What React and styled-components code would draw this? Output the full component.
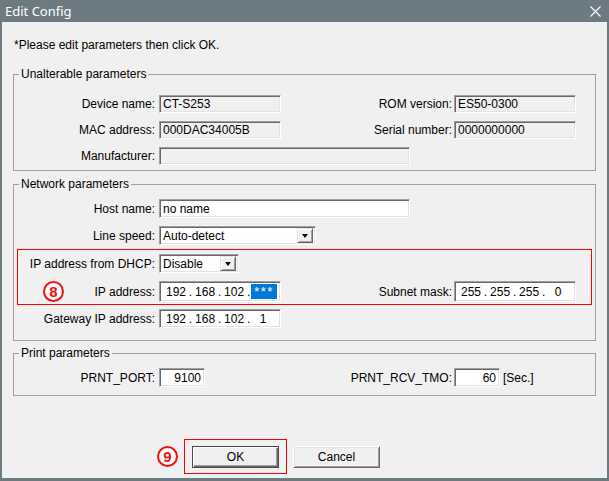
import React from 'react';
import styled, { createGlobalStyle } from 'styled-components';

const GlobalStyle = createGlobalStyle`
  html, body {
    margin: 0;
    padding: 0;
    background: #6b7b81;
    overflow: hidden;
  }
  body {
    font-family: "Liberation Sans", Arial, sans-serif;
    font-size: 12px;
    color: #000;
  }
`;

const Frame = styled.div`
  width: 609px;
  height: 481px;
  box-sizing: border-box;
  background: #6b7b81;
  display: flex;
  flex-direction: column;
  padding: 0 2px 3px 2px;
`;

const TitleBar = styled.div`
  flex: 0 0 22px;
  display: flex;
  align-items: center;
  justify-content: space-between;
  padding: 0 6px 0 3px;
  color: #fff;
  font-family: "Noto Sans", "Open Sans", sans-serif;
  font-size: 13px;
`;

const Body = styled.div`
  flex: 1;
  background: #f0f0f0;
  display: flex;
  flex-direction: column;
  padding: 16px 11px 0 11px;
`;

const Note = styled.div`
  line-height: 14px;
  padding-left: 1px;
`;

const Group = styled.fieldset`
  margin: ${p => p.$top}px 0 0 0;
  padding: 0;
  min-width: 0;
  border: 1px solid #a0a0a0;
`;

const Legend = styled.legend`
  margin-left: 5px;
  padding: 0 2px;
  line-height: 14px;
  font-size: 12px;
`;

const Rows = styled.div`
  display: flex;
  flex-direction: column;
  gap: 8px;
  padding: ${p => p.$pad};
`;

const Row = styled.div`
  display: grid;
  grid-template-columns: ${p => p.$lead || 145}px 171px 124px 1fr;
  align-items: center;
  height: ${p => p.$h || 19}px;
`;

const Label = styled.span`
  display: flex;
  justify-content: flex-end;
  align-items: center;
  padding-right: ${p => p.$gap}px;
  white-space: nowrap;
`;

const Cell = styled.div`
  display: flex;
  align-items: center;
  height: 100%;
  grid-column: ${p => (p.$span ? 'span 2' : 'auto')};
`;

const TextBox = styled.div`
  box-sizing: border-box;
  width: ${p => p.$w}px;
  height: 100%;
  display: flex;
  align-items: center;
  justify-content: ${p => (p.$right ? 'flex-end' : 'flex-start')};
  padding: 0 3px;
  background: ${p => (p.$readOnly ? '#f0f0f0' : '#fff')};
  border: 1px solid;
  border-color: #a0a0a0 #fff #fff #a0a0a0;
  box-shadow: inset 1px 1px 0 #696969, inset -1px -1px 0 #e3e3e3;
  white-space: nowrap;
`;

const IpBox = styled(TextBox)`
  padding: 0 0 0 6px;
`;

const Octet = styled.span`
  flex: 0 0 20px;
  white-space: nowrap;
  display: flex;
  justify-content: center;
`;

const Dot = styled.span`
  flex: 0 0 9px;
  text-align: center;
`;

const Selected = styled.span`
  flex: 0 0 26px;
  background: #0078d7;
  color: #fff;
  text-align: center;
  font-size: 13px;
  letter-spacing: 1.5px;
  line-height: 15px;
  margin-left: -2px;
`;

const Combo = styled(TextBox)`
  justify-content: space-between;
  padding: 0 2px 0 3px;
  background: #fff;
`;

const DropButton = styled.span`
  box-sizing: border-box;
  width: 16px;
  height: 15px;
  display: flex;
  align-items: center;
  justify-content: center;
  background: #f0f0f0;
  border: 1px solid;
  border-color: #e3e3e3 #696969 #696969 #e3e3e3;
  box-shadow: inset 1px 1px 0 #fff, inset -1px -1px 0 #a0a0a0;
`;

const Arrow = styled.span`
  width: 0;
  height: 0;
  border-left: 3.5px solid transparent;
  border-right: 3.5px solid transparent;
  border-top: 4px solid #000;
`;

const Unit = styled.span`
  margin-left: 3px;
`;

const Highlight = styled.div`
  margin: -4px 3px;
  border: 1px solid #ff0000;
  padding: 4px 0;
  display: flex;
  flex-direction: column;
  gap: 8px;
`;

const Badge = styled.span`
  box-sizing: border-box;
  flex: 0 0 ${p => p.$size || 21}px;
  width: ${p => p.$size || 21}px;
  height: ${p => p.$size || 21}px;
  margin-left: ${p => p.$left || 0}px;
  margin-right: ${p => (p.$auto ? 'auto' : `${p.$right || 0}px`)};
  border-radius: 50%;
  border: 2.5px solid #ee1111;
  background: #fff;
  color: #ee1111;
  font-weight: bold;
  font-size: 15px;
  display: flex;
  align-items: center;
  justify-content: center;
`;

const Footer = styled.div`
  margin-top: 43px;
  display: flex;
  align-items: center;
  padding-left: 144px;
`;

const OkFrame = styled.div`
  border: 1px solid #ff0000;
  padding: 6px 7px 5px 7px;
`;

const Button = styled.button`
  box-sizing: border-box;
  width: 87px;
  height: 22px;
  margin: 0 0 0 ${p => p.$left || 0}px;
  padding: 0;
  font-family: "Liberation Sans", Arial, sans-serif;
  font-size: 12px;
  color: #000;
  background: #f0f0f0;
  border: 1px solid;
  border-color: ${p => (p.$default ? '#4a4a4a' : '#fff #696969 #696969 #fff')};
  box-shadow: ${p =>
    p.$default
      ? 'inset 1px 1px 0 #fff, inset -1px -1px 0 #696969, inset -2px -2px 0 #a0a0a0'
      : 'inset 1px 1px 0 #e3e3e3, inset -1px -1px 0 #a0a0a0'};
`;

const CloseIcon = () => (
  <svg width="11" height="11" viewBox="0 0 11 11">
    <path d="M0.5 0.5 L10.5 10.5 M10.5 0.5 L0.5 10.5" stroke="#fff" strokeWidth="1.1" />
  </svg>
);

const Ip = ({ parts, selectLast }) => (
  <IpBox $w={122}>
    {parts.map((p, i) => (
      <React.Fragment key={i}>
        {i > 0 && <Dot>.</Dot>}
        {selectLast && i === 3 ? <Selected>{p}</Selected> : <Octet>{p}</Octet>}
      </React.Fragment>
    ))}
  </IpBox>
);

const Select = ({ w, value }) => (
  <Combo $w={w}>
    <span>{value}</span>
    <DropButton>
      <Arrow />
    </DropButton>
  </Combo>
);

export default function App() {
  return (
    <Frame>
      <GlobalStyle />
      <TitleBar>
        <span>Edit Config</span>
        <CloseIcon />
      </TitleBar>
      <Body>
        <Note>*Please edit parameters then click OK.</Note>

        <Group $top={15}>
          <Legend>Unalterable parameters</Legend>
          <Rows $pad="14px 0 5px">
            <Row $h={18}>
              <Label $gap={4}>Device name:</Label>
              <Cell><TextBox $w={122} $readOnly>CT-S253</TextBox></Cell>
              <Label $gap={2}>ROM version:</Label>
              <Cell><TextBox $w={122} $readOnly>ES50-0300</TextBox></Cell>
            </Row>
            <Row $h={18}>
              <Label $gap={4}>MAC address:</Label>
              <Cell><TextBox $w={122} $readOnly>000DAC34005B</TextBox></Cell>
              <Label $gap={2}>Serial number:</Label>
              <Cell><TextBox $w={122} $readOnly>0000000000</TextBox></Cell>
            </Row>
            <Row $h={18}>
              <Label $gap={4}>Manufacturer:</Label>
              <Cell $span><TextBox $w={251} $readOnly /></Cell>
            </Row>
          </Rows>
        </Group>

        <Group $top={6}>
          <Legend>Network parameters</Legend>
          <Rows $pad="8px 0 12px">
            <Row>
              <Label $gap={4}>Host name:</Label>
              <Cell $span><TextBox $w={251}>no name</TextBox></Cell>
            </Row>
            <Row>
              <Label $gap={4}>Line speed:</Label>
              <Cell><Select w={157} value="Auto-detect" /></Cell>
            </Row>
            <Highlight>
              <Row $lead={141}>
                <Label $gap={4}>IP address from DHCP:</Label>
                <Cell><Select w={80} value="Disable" /></Cell>
              </Row>
              <Row $lead={141}>
                <Label $gap={4}>
                  <Badge $left={25} $auto>8</Badge>
                  IP address:
                </Label>
                <Cell><Ip parts={['192', '168', '102', '***']} selectLast /></Cell>
                <Label $gap={2}>Subnet mask:</Label>
                <Cell><Ip parts={['255', '255', '255', '0']} /></Cell>
              </Row>
            </Highlight>
            <Row>
              <Label $gap={4}>Gateway IP address:</Label>
              <Cell><Ip parts={['192', '168', '102', '1']} /></Cell>
            </Row>
          </Rows>
        </Group>

        <Group $top={5}>
          <Legend>Print parameters</Legend>
          <Rows $pad="8px 0 8px">
            <Row>
              <Label $gap={4}>PRNT_PORT:</Label>
              <Cell><TextBox $w={46} $right>9100</TextBox></Cell>
              <Label $gap={2}>PRNT_RCV_TMO:</Label>
              <Cell>
                <TextBox $w={46} $right>60</TextBox>
                <Unit>[Sec.]</Unit>
              </Cell>
            </Row>
          </Rows>
        </Group>

        <Footer>
          <Badge $size={21} $right={6}>9</Badge>
          <OkFrame>
            <Button $default>OK</Button>
          </OkFrame>
          <Button $left={6}>Cancel</Button>
        </Footer>
      </Body>
    </Frame>
  );
}
